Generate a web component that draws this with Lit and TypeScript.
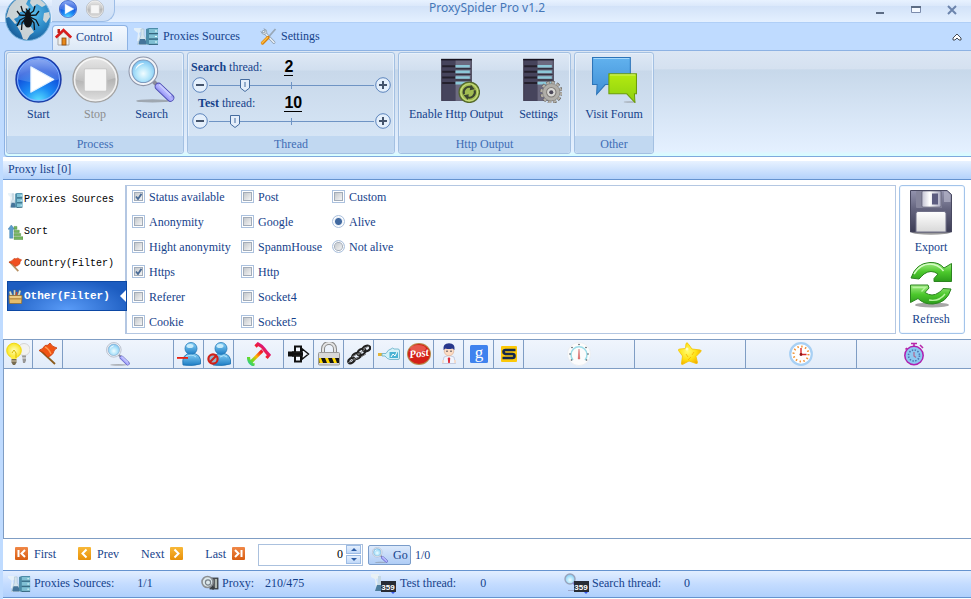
import { LitElement, html, svg, css } from "lit";
import { customElement, state } from "lit/decorators.js";

/* Shared gradients and symbols; every icon is referenced through <use>. */
const sprite = svg`
  <defs>
    <radialGradient id="gBlue" cx="50%" cy="100%" r="95%">
      <stop offset="0" stop-color="#5fe6ff"/><stop offset=".35" stop-color="#1c8cf5"/>
      <stop offset=".75" stop-color="#0d46d8"/><stop offset="1" stop-color="#2a62e6"/>
    </radialGradient>
    <linearGradient id="gShine" x1="0" y1="0" x2="0" y2="1">
      <stop offset="0" stop-color="#fff" stop-opacity=".45"/><stop offset="1" stop-color="#fff" stop-opacity=".15"/>
    </linearGradient>
    <linearGradient id="gGray" x1="0" y1="0" x2="0" y2="1">
      <stop offset="0" stop-color="#d4d4d4"/><stop offset=".5" stop-color="#b4b4b4"/><stop offset="1" stop-color="#e2e2e2"/>
    </linearGradient>
    <radialGradient id="gLens" cx="50%" cy="60%" r="60%">
      <stop offset="0" stop-color="#f0fcff"/><stop offset=".5" stop-color="#b4e6fb"/><stop offset="1" stop-color="#7cc4f2"/>
    </radialGradient>
    <linearGradient id="gHandle" x1="0" y1="1" x2="1" y2="0">
      <stop offset="0" stop-color="#5a5ad8"/><stop offset=".5" stop-color="#b4b4ff"/><stop offset="1" stop-color="#5c60c8"/>
    </linearGradient>
    <radialGradient id="gGlobe" cx="60%" cy="40%" r="65%">
      <stop offset="0" stop-color="#5cc0ee"/><stop offset=".6" stop-color="#2a86c4"/><stop offset="1" stop-color="#1a5c98"/>
    </radialGradient>
    <linearGradient id="gChatB" x1="0" y1="0" x2="0" y2="1">
      <stop offset="0" stop-color="#62b2ee"/><stop offset="1" stop-color="#3f8fd6"/>
    </linearGradient>
    <linearGradient id="gChatG" x1="0" y1="0" x2="0" y2="1">
      <stop offset="0" stop-color="#b4ea10"/><stop offset="1" stop-color="#8cd010"/>
    </linearGradient>
    <linearGradient id="gDisk" x1="0" y1="0" x2="0" y2="1">
      <stop offset="0" stop-color="#9494ae"/><stop offset=".45" stop-color="#64647e"/><stop offset="1" stop-color="#3c3c54"/>
    </linearGradient>
    <linearGradient id="gMetal" x1="0" y1="0" x2="1" y2="0">
      <stop offset="0" stop-color="#c4c4d4"/><stop offset=".4" stop-color="#fff"/><stop offset="1" stop-color="#a8a8c0"/>
    </linearGradient>
    <linearGradient id="gPaper" x1="0" y1="0" x2="0" y2="1">
      <stop offset="0" stop-color="#fff"/><stop offset="1" stop-color="#d8d8d8"/>
    </linearGradient>
    <linearGradient id="gGreen" x1="0" y1="0" x2="0" y2="1">
      <stop offset="0" stop-color="#a4ec86"/><stop offset=".5" stop-color="#4cc82c"/><stop offset="1" stop-color="#2c9c1c"/>
    </linearGradient>
    <linearGradient id="gUser" x1="0" y1="0" x2="0" y2="1">
      <stop offset="0" stop-color="#8cd4f8"/><stop offset="1" stop-color="#1c7cc4"/>
    </linearGradient>
    <linearGradient id="gRain" gradientUnits="userSpaceOnUse" x1="1" y1="22" x2="20" y2="3">
      <stop offset="0" stop-color="#20c8a0"/><stop offset=".2" stop-color="#6cdc20"/><stop offset=".42" stop-color="#ffb400"/>
      <stop offset=".65" stop-color="#f42020"/><stop offset=".85" stop-color="#e01870"/><stop offset="1" stop-color="#a028c0"/>
    </linearGradient>
    <linearGradient id="gOrange" x1="0" y1="0" x2="0" y2="1">
      <stop offset="0" stop-color="#f08848"/><stop offset="1" stop-color="#d85c10"/>
    </linearGradient>
    <linearGradient id="gAmber" x1="0" y1="0" x2="0" y2="1">
      <stop offset="0" stop-color="#f8b838"/><stop offset="1" stop-color="#e89008"/>
    </linearGradient>
    <radialGradient id="gStar" cx="40%" cy="40%" r="65%">
      <stop offset="0" stop-color="#fffc70"/><stop offset=".6" stop-color="#ffe010"/><stop offset="1" stop-color="#f4a800"/>
    </radialGradient>
    <radialGradient id="gBulb" cx="50%" cy="50%" r="60%">
      <stop offset="0" stop-color="#ffffc0"/><stop offset="1" stop-color="#f8e000"/>
    </radialGradient>
  </defs>

  <symbol id="globe" viewBox="0 0 46 46">
    <circle cx="23" cy="23" r="22.5" fill="url(#gGlobe)" stroke="#7ab4dc"/>
    <path fill="#dcdcd8" opacity=".9" d="M4 13C8 6 14 2 20 2l3 3-2 4 3 3-4 4-5 1-2 5-4 2 3 4-2 1-6-7-3 1zM26 3c6-1 11 2 15 7l-4 2-5-3-4 3-3-4zM12 31l6-2 8 3 3 5-4 3-3 5-4-1-2-6zM39 18l5-1 1 5-4 6-3-3z"/>
    <g fill="#101418"><ellipse cx="23" cy="27" rx="4" ry="5.500"/><ellipse cx="23" cy="20" rx="3" ry="3.200"/><circle cx="23" cy="16.500" r="1.800"/></g>
    <g fill="none" stroke="#101418" stroke-width="1.300" stroke-linejoin="round">
      <path d="M21.500 19l-4-3-1.500-5M21 20.500l-6-.5-3-4M21 22l-6 3-3 6M21 23l-4 5-.5 7M24.500 19l4-3 1.500-5M25 20.500l6-.5 3-4M25 22l6 3 3 6M25 23l4 5 .5 7M22 15.500l-1-2M24 15.500l1-2"/>
    </g>
  </symbol>

  <symbol id="play" viewBox="0 0 46 46">
    <circle cx="23" cy="23" r="22" fill="url(#gBlue)" stroke="#1c3ca8" stroke-width="1.4"/>
    <circle cx="23" cy="23" r="20.5" fill="none" stroke="#86b4ff" stroke-width="1"/>
    <path d="M3 23a20 20 0 0 1 40 0q-20 6-40 0z" fill="url(#gShine)"/>
    <path d="M15.500 10.500L38 23 15.500 35.500z" fill="#fff" stroke="#e0f0ff" stroke-linejoin="round"/>
  </symbol>
  <symbol id="stop" viewBox="0 0 46 46">
    <circle cx="23" cy="23" r="22" fill="url(#gGray)" stroke="#a4a4a4" stroke-width="1.4"/>
    <circle cx="23" cy="23" r="20.500" fill="none" stroke="#f0f0f0" stroke-width="1.6"/>
    <path d="M3 21a20 20 0 0 1 40 0q-20 8-40 2z" fill="url(#gShine)"/>
    <rect x="12" y="12.500" width="22" height="22" rx="1.500" fill="#f6f6f6" stroke="#c8c8c8"/>
  </symbol>
  <symbol id="search" viewBox="0 0 46 46">
    <ellipse cx="24" cy="44" rx="16" ry="1.600" fill="#666" opacity=".45"/>
    <path d="M24 24l6 6" stroke="#8c8c9c" stroke-width="4"/>
    <path d="M30 30l11.500 11" stroke="#4a4ab0" stroke-width="7.500" stroke-linecap="round"/>
    <path d="M30 30l11.500 11" stroke="url(#gHandle)" stroke-width="6" stroke-linecap="round"/>
    <path d="M31 28.500l10.500 10" stroke="#c8ccff" stroke-width="2" stroke-linecap="round"/>
    <circle cx="15" cy="15" r="14" fill="#f2f4f8" stroke="#8c94a8" stroke-width="1"/>
    <circle cx="15" cy="15" r="11" fill="url(#gLens)" stroke="#7c9cc0" stroke-width="1"/>
    <path d="M7 14a8 8 0 0 1 9-7q-6 2-9 7z" fill="#fff" opacity=".9"/>
  </symbol>

  <symbol id="house" viewBox="0 0 17 18">
    <path d="M3 9v8h11V9L8.500 4z" fill="#f0f0ec" stroke="#a8a8a8"/>
    <rect x="7" y="10" width="4" height="7" fill="#e88818" stroke="#8c4c10" stroke-width=".8"/>
    <path d="M2.500 1h2.500v4H2.500z" fill="#c02018"/>
    <path d="M.8 9.500L8.500 2l7.700 7.500" fill="none" stroke="#d81c1c" stroke-width="2.600"/>
  </symbol>
  <symbol id="sources" viewBox="0 0 25 18" preserveAspectRatio="none">
    <path d="M0 1h8v3L5 6l2 8H3l1-8-4-3z" fill="#e8f2f8" opacity=".9"/>
    <path d="M7 2h3v6l4 8q0 2-2 2H5q-2 0-1-2l3-8z" fill="#d4e4ee" stroke="#a8c0cc" stroke-width=".6"/>
    <path d="M6 12h5l2 4q0 1-1 1.500H5.500Q4 17 5 15z" fill="#44749a"/>
    <path d="M12 2l3-1h9v16l-9 1-3-1z" fill="#4c8ca8"/>
    <path d="M15 2h9v4h-9zM15 7.500h9v4h-9zM15 13h9v4h-9z" fill="#80c0d4"/>
    <path d="M15 6.500h9M15 12h9M15 17.400h9" stroke="#34647c" stroke-width="1"/>
    <path d="M21 4h2M21 9.500h2M21 15h2" stroke="#e8ffff" stroke-width="1"/>
  </symbol>
  <symbol id="tools" viewBox="0 0 17 17">
    <path d="M3.500 3.500L14 14.500" stroke="#8898a8" stroke-width="2.800" stroke-linecap="round"/>
    <path d="M3.500 3.500L14 14.500" stroke="#e8f0f8" stroke-width="1.600" stroke-linecap="round"/>
    <path d="M1 3.500L2.500 5 5 4.500 5.200 2 3.800.8Q7 1 6.800 4.400L5 6.500Q2 7 1 3.500z" fill="#dce4ec" stroke="#8090a0" stroke-width=".6"/>
    <path d="M15.500 1l-7 8" stroke="#98a8b8" stroke-width="1.800"/>
    <path d="M8 9.500L2.500 15" stroke="#d88010" stroke-width="3.200" stroke-linecap="round"/>
    <path d="M7.500 9.500l-5.500 5.500" stroke="#ffc040" stroke-width="1.400" stroke-linecap="round"/>
  </symbol>

  <symbol id="rack" viewBox="0 0 46 46">
    <rect x="8" y="3" width="30" height="41" fill="#3a3648"/>
    <path d="M9 4h13v40H9z" fill="#46445c"/><path d="M22 4h15v40H22z" fill="#6c6a80"/>
    <path d="M8 3.500h30" stroke="#181420" stroke-width="1.500"/>
    <path d="M9 10h13M9 15.500h13M9 21h13M9 26.500h13" stroke="#24202c" stroke-width="2"/>
    <path d="M22 10h14M22 15.500h14M22 21h14M22 26.500h14" stroke="#8cc8d8" stroke-width="2.600"/>
    <path d="M22 12.500h15M22 18h15M22 23.500h15" stroke="#34303e" stroke-width="1.400"/>
  </symbol>
  <symbol id="rackSync" viewBox="0 0 46 46">
    <use href="#rack" width="46" height="46"/>
    <circle cx="35.500" cy="35.500" r="10" fill="#a2bc52" stroke="#54682c" stroke-width="1.200"/>
    <circle cx="35.500" cy="35.500" r="8.300" fill="none" stroke="#c8dc80" stroke-width="1"/>
    <g fill="none" stroke="#3c4630" stroke-width="2"><path d="M30.300 37.500a5.500 5.500 0 0 1 7.500-6.800M40.700 33.500a5.500 5.500 0 0 1-7.500 6.800"/></g>
    <path d="M37 28l4 4.500-5 1zM34 43l-4-4.500 5-1z" fill="#3c4630"/>
  </symbol>
  <symbol id="rackGear" viewBox="0 0 46 46">
    <use href="#rack" width="46" height="46"/>
    <circle cx="35.500" cy="35.500" r="9" fill="none" stroke="#54504c" stroke-width="4.400" stroke-dasharray="2.900 1.812"/>
    <circle cx="35.500" cy="35.500" r="9" fill="none" stroke="#b4b0a8" stroke-width="3.400" stroke-dasharray="2.700 2.012"/>
    <circle cx="35.500" cy="35.500" r="8.500" fill="#b0aea8" stroke="#7c7a76" stroke-width=".6"/>
    <circle cx="35.500" cy="35.500" r="4.600" fill="#d8d8d4" stroke="#807c78"/>
    <circle cx="35.500" cy="35.500" r="2" fill="#4c4858"/>
  </symbol>
  <symbol id="chat" viewBox="0 0 46 46">
    <ellipse cx="38" cy="45" rx="6" ry="1" fill="#777" opacity=".35"/>
    <path d="M1.500 1.500h37V28H14L5.500 37.500 6 28H1.500z" fill="url(#gChatB)" stroke="#2c74b8"/>
    <path d="M2.500 2.500h35" stroke="#a4d8fc"/>
    <path d="M17.500 17.500h27v19.500h-2L43 45.500 35 37H17.500z" fill="url(#gChatG)" stroke="#6c9c08"/>
    <path d="M18.500 18.500h25" stroke="#d8f870"/>
  </symbol>
  <symbol id="disk" viewBox="0 0 46 46">
    <ellipse cx="23" cy="43.500" rx="19" ry="2.200" fill="#222" opacity=".45"/>
    <path d="M2.500 1.500H39l4.500 4V43h-41z" fill="url(#gDisk)" stroke="#484860"/>
    <path d="M36 2.500h3l3.500 3.500v7H36z" fill="#b4b4c8" opacity=".7"/>
    <rect x="8" y="2" width="26" height="17" rx="1" fill="#86869c"/>
    <rect x="14" y="2" width="19" height="16" rx="1" fill="url(#gMetal)" stroke="#505068" stroke-width=".6"/>
    <rect x="24" y="4.500" width="6" height="11" fill="#5c5c80"/>
    <path d="M8 43V24.500Q8 22.500 10 22.500h26q2 0 2 2V43z" fill="url(#gPaper)" stroke="#707088"/>
  </symbol>
  <symbol id="refresh" viewBox="0 0 46 48">
    <ellipse cx="24" cy="45" rx="17" ry="2.400" fill="#222" opacity=".4"/>
    <path d="M3 18Q8 3 22 2.500q9-.5 14 5.500l7.500-4.500V21.500H26v-3l4-4.500q-7-5-14 0-3 3-5 5z" fill="url(#gGreen)" stroke="#2c8420" stroke-linejoin="round"/>
    <path d="M6 14Q12 4 22 4q8 0 13.500 7" fill="none" stroke="#d4fcc4" stroke-width="1.600"/>
    <path d="M43 29Q39 43 25 44q-9 .5-15-5.500L2.500 42.500V25H20l1 3-4 4.500q7 5 14 0 3-2 4-4z" fill="url(#gGreen)" stroke="#2c8420" stroke-linejoin="round"/>
    <path d="M4.500 27.500h13l-4 4M37 34q-6 8-16 6" fill="none" stroke="#b8f4a0" stroke-width="1.400"/>
  </symbol>

  <symbol id="sort" viewBox="0 0 16 16">
    <path d="M3.500 0L7 4.500H5.200V14H1.800V4.500H0z" fill="#5c9ccc" stroke="#3c7cb0" stroke-width=".5"/>
    <path d="M6.500 1.500h3v3h-3zM6.500 5.500H12v2.500H6.500zM6.500 9h7v2.500h-7zM6.500 12.500H16V15.500H6.500z" fill="#74b45c" stroke="#4c8c3c" stroke-width=".5"/>
  </symbol>
  <symbol id="flag" viewBox="0 0 24 24">
    <path d="M4 8l15 14" stroke="#8c5c1c" stroke-width="1.800"/>
    <path d="M3 8.500Q7 7 9 3.500q3 .5 5-2.500 2 4 7 5-3 1-4 5.500-2 3-5.500 3.500Q9 10 3 8.500z" fill="#f05414" stroke="#c83808" stroke-width=".8"/>
    <path d="M9 5q4 2 6 7" fill="none" stroke="#ff9850" stroke-width="1.400"/>
  </symbol>
  <symbol id="flagLeft" viewBox="0 0 16 16">
    <path d="M1.500 5L11 15" stroke="#b89060" stroke-width="1.800"/>
    <path d="M1 5.500Q5 4 6.500 1.500q2 1 4-.5 2 1.500 4 2-2 2-2 4.500Q10 10 7.500 10 5 6.500 1 5.500z" fill="#f05020" stroke="#c03008" stroke-width=".6"/>
  </symbol>
  <symbol id="toolbox" viewBox="0 0 16 16">
    <path d="M2 7L1 3l2-1 2 5zM6 7V1h2v6zM10 7l2-6 2 1-1.500 5z" fill="#d8e0d0" stroke="#607060" stroke-width=".5"/>
    <path d="M8.500 7l1-4" stroke="#d04828" stroke-width="1.400"/>
    <path d="M1 7h14l-.5 8.500h-13z" fill="#e4bc6c" stroke="#946c28" stroke-width=".8"/>
    <path d="M1.500 10.500h13" stroke="#a87c34"/><path d="M2 8.500h12" stroke="#f8e0a4"/>
  </symbol>

  <symbol id="bulbs" viewBox="0 0 24 24">
    <circle cx="18" cy="7.500" r="6" fill="#f2f2f0" stroke="#d4d4d4"/><path d="M16 13.500h4v5l-1 2.500h-2z" fill="#989898"/><path d="M16 16h4" stroke="#eee"/>
    <circle cx="8" cy="8.500" r="7.300" fill="url(#gBulb)" stroke="#f0d810"/>
    <path d="M4.500 14h7l-1 3h-5z" fill="#ffec40"/><path d="M6 11l2-3 2 3v5" fill="none" stroke="#d8b800"/>
    <path d="M5.500 17h5v3.500L9 23H7l-1.500-2.500z" fill="#786c50"/><path d="M5.500 19h5" stroke="#d8ccb0"/>
  </symbol>
  <symbol id="userMinus" viewBox="0 0 24 24">
    <path d="M6 23Q4 12 14.500 11 25 12 23.500 22q-8 2.500-17.500 1z" fill="url(#gUser)" stroke="#1c70b0" stroke-width=".8"/>
    <circle cx="14" cy="6.500" r="6" fill="url(#gUser)" stroke="#2478b8" stroke-width=".8"/>
    <ellipse cx="13" cy="4" rx="3.500" ry="2" fill="#e0f8ff" opacity=".8"/><path d="M9 15q5-4 10 0" fill="none" stroke="#b0e4fc"/>
    <rect x="0" y="15" width="11" height="1.800" fill="#e82010"/>
  </symbol>
  <symbol id="userBlock" viewBox="0 0 24 24">
    <path d="M6 23Q4 12 14.500 11 25 12 23.500 22q-8 2.500-17.500 1z" fill="url(#gUser)" stroke="#1c70b0" stroke-width=".8"/>
    <circle cx="14" cy="6.500" r="6" fill="url(#gUser)" stroke="#2478b8" stroke-width=".8"/>
    <ellipse cx="13" cy="4" rx="3.500" ry="2" fill="#e0f8ff" opacity=".8"/><path d="M13 15q4-3 7 0" fill="none" stroke="#b0e4fc"/>
    <circle cx="6" cy="17" r="4.600" fill="#94b4cc" stroke="#d02018" stroke-width="2.200"/><path d="M3 20l6-6" stroke="#d02018" stroke-width="2.200"/>
  </symbol>
  <symbol id="rainbow" viewBox="0 0 24 24">
    <g fill="none" stroke="url(#gRain)" stroke-width="3.200">
      <path d="M4 20L15.500 8.500"/><path d="M8.500 4.500L11 2Q15 4 17 7t5 6l-2.500 3"/><path d="M1.500 15Q1.500 20 5.500 22.500l2 .5"/>
    </g>
  </symbol>
  <symbol id="cross" viewBox="0 0 24 24">
    <path d="M1 9.500h5v5H1z" fill="#101010"/><path d="M5 12h12" stroke="#101010" stroke-width="4.500"/>
    <path d="M8 4.500h6v15H8z" fill="#f4f8ff" stroke="#101010" stroke-width="2"/>
    <path d="M6 10h9V6.800L21.500 12 15 17.200V14H6z" fill="#f4f8ff" stroke="#101010" stroke-width="1.400"/>
    <path d="M5 12h11" stroke="#101010" stroke-width="3.600"/>
  </symbol>
  <symbol id="lock" viewBox="0 0 24 24">
    <path d="M6 12V7a6 6 0 0 1 12 0v5" fill="none" stroke="#888" stroke-width="4"/><path d="M6 12V7a6 6 0 0 1 12 0v5" fill="none" stroke="#e4e4e4" stroke-width="2"/>
    <rect x="1.500" y="10.500" width="21" height="12.500" rx="1" fill="#d8d8d8" stroke="#999"/><rect x="2" y="16" width="20" height="5" fill="#141414"/>
    <path d="M2 16h2l2 5H2.500zM8 16h3l2 5h-3zM15 16h3l2 5h-3z" fill="#ffd800"/>
  </symbol>
  <symbol id="chain" viewBox="0 0 24 24">
    <g fill="none" stroke="#202020" stroke-width="2.200"><ellipse cx="4.500" cy="18.500" rx="3.500" ry="2.200" transform="rotate(-35 4.500 18.500)"/><ellipse cx="9.500" cy="14" rx="4.500" ry="2.800" transform="rotate(-20 9.500 14)"/><ellipse cx="14.500" cy="10" rx="4.500" ry="2.800" transform="rotate(-35 14.500 10)"/><ellipse cx="19.500" cy="6.500" rx="3.800" ry="2.600" transform="rotate(-20 19.500 6.500)"/></g>
    <path d="M1 21l7-5M5 15l7-4M11 13l7-6M16 7l6-3M7 18l5-3M14 15l5-3" stroke="#777" stroke-width="1"/>
  </symbol>
  <symbol id="bottle" viewBox="0 0 24 24">
    <path d="M1 11h4v3H1z" fill="#e4b434"/><path d="M5 11.500h4q2-4 5-4.500 2-2 3 0h4q1.500 0 1.500 2V16q0 1.500-1.500 1.500h-8q-3-.5-5-3.500H5z" fill="#d4f2f8" stroke="#70b4cc" stroke-width=".9"/>
    <path d="M12.500 10H21v6h-8.500z" fill="#48b4d4"/><path d="M14 15l2-3 2 2 2-4" fill="none" stroke="#fff"/>
  </symbol>
  <symbol id="post" viewBox="0 0 24 24">
    <ellipse cx="12" cy="12" rx="12" ry="11" fill="#b88848"/><ellipse cx="12" cy="12" rx="11" ry="10" fill="#d42018"/>
    <ellipse cx="11" cy="6.500" rx="8" ry="3.500" fill="#f47c6c" opacity=".6"/>
  </symbol>
  <symbol id="boy" viewBox="0 0 24 24">
    <path d="M7 15q5-3 10 0l1.500 6.500H5.500z" fill="#f0f4fc" stroke="#b4bcd4" stroke-width=".7"/><path d="M12 15l1.200 1.500-.4 4.500h-1.600l-.4-4.500z" fill="#e02838"/>
    <circle cx="12" cy="9" r="4.800" fill="#fcdcc4" stroke="#d8a888" stroke-width=".6"/><path d="M6.500 8Q5.500 1.500 12 1.200 18.500 1.500 17.500 8l-2-1.500q-4 1-7 0z" fill="#28388c"/>
    <path d="M10 8.500v1.500M14 8.500v1.500" stroke="#282838"/><path d="M6 18v3M18 18v3" stroke="#fcdcc4" stroke-width="1.500"/>
  </symbol>
  <symbol id="google" viewBox="0 0 24 24"><rect x="3" y="3" width="18" height="18" rx="1.500" fill="#3f82ee"/></symbol>
  <symbol id="sBox" viewBox="0 0 24 24">
    <rect x="4" y="4" width="16" height="16" rx="1" fill="#fcc808"/>
    <path d="M18.500 8H8.500Q6.500 8 6.500 9.800t2 2.200h7q2 0 2 2t-2 2h-10" fill="none" stroke="#14284c" stroke-width="2.600"/>
  </symbol>
  <symbol id="gauge" viewBox="0 0 24 24">
    <circle cx="12" cy="12" r="11.500" fill="#fcfcfc" stroke="#e4e8ec" stroke-width=".6"/><path d="M6 18a8 8 0 1 1 12 0" fill="none" stroke="#9cdce8" stroke-width="1.500"/>
    <g fill="#505860"><circle cx="3" cy="12" r=".8"/><circle cx="5" cy="5.500" r=".8"/><circle cx="12" cy="2.500" r=".8"/><circle cx="19" cy="5.500" r=".8"/><circle cx="21" cy="12" r=".8"/><circle cx="4.500" cy="18" r=".8"/><circle cx="19.500" cy="18" r=".8"/></g>
    <path d="M11.200 17L12 7l.8 10z" fill="#d83030" stroke="#d88080" stroke-width=".6"/>
  </symbol>
  <symbol id="star" viewBox="0 0 24 24">
    <path d="M8 1.500q1-1.500 2 0l4 5.500 8.500 1q1.500.5 0 2L18 14.500l1.500 6q0 1.500-1.500 1l-7-2.500-6.500 3.500q-1.500 0-1-1.500l1-7-4-5.500Q0 7 2 7l5.500-.5z" fill="url(#gStar)" stroke="#f4c400" stroke-width=".8"/>
    <path d="M8 12l2 3M16 10l-2 3M10 18l3-3" stroke="#f8b400" stroke-width=".8"/><circle cx="9" cy="7" r="1.500" fill="#fffcc0"/>
  </symbol>
  <symbol id="clock" viewBox="0 0 24 24">
    <circle cx="12" cy="12" r="10.800" fill="#fff" stroke="#a8d0f4" stroke-width="2.200"/>
    <circle cx="12" cy="12" r="7.500" fill="none" stroke="#f09030" stroke-width="2" stroke-dasharray="1.400 2.527"/>
    <path d="M12 6v6.500h5.500" fill="none" stroke="#d82828" stroke-width="1.400"/><circle cx="12" cy="12.500" r="1.400" fill="#901818"/>
  </symbol>
  <symbol id="stopwatch" viewBox="0 0 24 24">
    <path d="M9 1.500h6M12 1.500v3M18 3l3 3M5 6L3.500 7.500" stroke="#b828a8" stroke-width="1.600"/>
    <circle cx="12" cy="13.500" r="9.200" fill="#8cc8f0" stroke="#b020b0" stroke-width="1.500"/>
    <circle cx="12" cy="13.500" r="5.500" fill="none" stroke="#4c74b0" stroke-width="1.600" stroke-dasharray="1.400 1.480"/>
    <path d="M12 10v4l2 1.500" fill="none" stroke="#b06890" stroke-width="1.200"/>
  </symbol>

  <symbol id="first" viewBox="0 0 13 13"><rect width="13" height="13" rx="1" fill="url(#gOrange)"/><path d="M3.500 3v7M10 3L6.500 6.500 10 10" fill="none" stroke="#fff" stroke-width="2"/></symbol>
  <symbol id="prev" viewBox="0 0 13 13"><rect width="13" height="13" rx="1" fill="url(#gAmber)"/><path d="M8.500 2.500l-4 4 4 4" fill="none" stroke="#fff" stroke-width="2"/></symbol>
  <symbol id="next" viewBox="0 0 13 13"><rect width="13" height="13" rx="1" fill="url(#gAmber)"/><path d="M4.500 2.500l4 4-4 4" fill="none" stroke="#fff" stroke-width="2"/></symbol>
  <symbol id="last" viewBox="0 0 13 13"><rect width="13" height="13" rx="1" fill="url(#gOrange)"/><path d="M9.500 3v7M3 3l3.500 3.500L3 10" fill="none" stroke="#fff" stroke-width="2"/></symbol>

  <symbol id="proxy" viewBox="0 0 18 16">
    <rect x="9" y="3" width="8" height="11" fill="#585c60" stroke="#303438" stroke-width=".8"/><path d="M14 4h2v9h-2z" fill="#b0b8b0"/>
    <path d="M9 10l4 4" stroke="#383c40" stroke-width="2.600"/>
    <circle cx="6.500" cy="7" r="5.500" fill="#dce8ec" stroke="#8c9094" stroke-width="1.600"/><circle cx="7" cy="7.500" r="2.600" fill="none" stroke="#788088" stroke-width="1.200"/>
  </symbol>
  <symbol id="counter" viewBox="0 0 25 21">
    <rect x="10" y="8" width="15" height="11" fill="#282c34"/>
    <path d="M20 19h4l-2 2z" fill="#3858f0"/>
  </symbol>
  <symbol id="countTest" viewBox="0 0 25 21">
    <path d="M0 1h8v4L5 6l3 9H5L4 6 0 4z" fill="#e8f0f4"/><path d="M7 3h3v5l3 10H4l3-9z" fill="#c4d8e4"/><path d="M6 12h4v6H4z" fill="#4c7c9c"/>
    <use href="#counter" width="25" height="21"/>
  </symbol>
  <symbol id="countSearch" viewBox="0 0 25 21">
    <circle cx="6" cy="6" r="5" fill="url(#gLens)" stroke="#98a4bc" stroke-width="1.400"/><path d="M9.500 9.500l4 4" stroke="#7c80d8" stroke-width="3"/><path d="M4 17.500h8" stroke="#88a" opacity=".6"/>
    <use href="#counter" width="25" height="21"/>
  </symbol>
`;

/* Lettering that sits on top of some icons. */
const digits = svg`<text x="17" y="17" text-anchor="middle" font-family="Liberation Sans, sans-serif" font-weight="bold" font-size="8" fill="#fff">359</text>`;
const LETTERS: Record<string, unknown> = {
  post: svg`<text x="12" y="15" text-anchor="middle" font-family="Liberation Serif, serif" font-weight="bold" font-style="italic" font-size="11" fill="#fff" transform="rotate(-8 12 12)">Post</text>`,
  google: svg`<text x="12" y="16" text-anchor="middle" font-family="Liberation Serif, serif" font-weight="normal" font-size="17" fill="#fff">g</text>`,
  countTest: digits,
  countSearch: digits,
};

const icon = (id: string, w: number, h = w) =>
  html`<svg width=${w} height=${h} aria-hidden="true"><use href="#${id}" width=${w} height=${h}></use>${LETTERS[id]}</svg>`;

const COLUMNS: [string, string, string][] = [
  ["bulbs", "Status", "first"], ["flag", "Country", "narrow"], ["search", "Address", "wide"],
  ["userMinus", "Anonymity", "narrow"], ["userBlock", "High anonymity", "narrow"], ["rainbow", "Type", "medium"],
  ["cross", "Http", "narrow"], ["lock", "Https", "narrow"], ["chain", "Referer", "narrow"], ["bottle", "Cookie", "narrow"],
  ["post", "Post", "narrow"], ["boy", "Custom", "narrow"], ["google", "Google", "narrow"], ["sBox", "Socket", "narrow"],
  ["gauge", "Speed", "wide"], ["star", "Rating", "wide"], ["clock", "Checked", "wide"], ["stopwatch", "Time", "rest"],
];

const FILTERS: string[][] = [
  ["Status available", "Anonymity", "Hight anonymity", "Https", "Referer", "Cookie"],
  ["Post", "Google", "SpanmHouse", "Http", "Socket4", "Socket5"],
];
const CHECKED = new Set(["Status available", "Https"]);

@customElement("app-root")
export class AppRoot extends LitElement {
  @state() private search = 2;
  @state() private test = 10;
  @state() private page = 0;

  static styles = css`
    :host {
      display: flex; flex-direction: column; min-height: 100vh; box-sizing: border-box;
      font: 12px/16px "Liberation Serif", serif; color: #15428b; background: #bfdbff;
      position: relative; overflow: hidden;
    }
    * { box-sizing: border-box; }
    button, input { font: inherit; color: inherit; margin: 0; }
    button { border: 0; padding: 0; background: none; }
    svg { display: block; flex: none; }
    .sprite { position: absolute; width: 0; height: 0; }

    .titlebar {
      display: grid; grid-template-columns: 1fr auto 1fr; height: 23px; padding-right: 1px;
      background: linear-gradient(#e8f2ff, #dce9fb 25%, #d2e2f8 27%, #e4f0ff); border-bottom: 1px solid #b0cff7;
    }
    .title { font: 12px/16px "Noto Sans", sans-serif; color: #4577b8; margin: 0; padding-left: 4px; }
    .quick {
      display: flex; align-items: center; gap: 9px; justify-self: start; height: 22px; width: 63px; margin-left: 52px; padding: 0 8px 4px 7px;
      border: 1px solid #9dbde6; border-width: 0 1px 1px 0; border-radius: 0 0 12px 0; background: linear-gradient(#dbe8fa, #cfe0f6);
    }
    .orb { position: absolute; left: 5px; top: -5px; z-index: 2; }
    .window { display: flex; justify-self: end; }
    .window button { width: 36px; height: 20px; display: grid; place-items: center; }

    .tabs { display: flex; align-items: flex-end; height: 27px; padding: 0 8px 0 52px; background: #bfdbff; }
    .tab { display: flex; align-items: center; gap: 4px; height: 25px; padding: 0 12px 3px 3px; }
    .tab.on {
      background: linear-gradient(#f4f9ff, #dce8f6); border: 1px solid #8db2e3; border-bottom: 0;
      border-radius: 4px 4px 0 0; width: 76px; padding: 0 2px 3px; margin-right: 3px;
    }
    .tab + .tab { margin-right: 5px; }
    .collapse { margin-left: auto; height: 27px; display: grid; place-items: center; width: 12px; }

    .ribbon {
      display: flex; gap: 3px; margin-left: 4px; padding: 1px 1px 2px; height: 107px;
      border: 1px solid #8db2e3; border-right: 0; border-bottom-color: #7ea9dd; border-radius: 4px 0 0 4px;
      background: linear-gradient(#dbe6f4, #d5e1f0 17%, #c7d8ea 18%, #e4f0ff 95%, #d6ffff);
    }
    .group {
      display: flex; flex-direction: column; border: 1px solid #a3c0e2; border-radius: 3px; box-shadow: inset 0 0 0 1px #e6f0fb;
      background: linear-gradient(#dee8f5, #d1dfef 17%, #c8d8ea 18%, #d9e8f8); margin: 0;
    }
    .caption { height: 17px; line-height: 16px; text-align: center; background: #c1d8f1; color: #3e6db5; border-radius: 0 0 3px 3px; }
    .tools { display: flex; flex: 1; padding: 3px; }
    .process { width: 178px; }
    .thread { width: 208px; }
    .http { width: 173px; }
    .other { width: 80px; }
    .http .tools { gap: 5px; padding-left: 8px; }
    .big { display: flex; flex-direction: column; align-items: center; gap: 3px; flex: 1; }
    .big.long { flex: none; width: 98px; }
    .big:disabled { color: #8d8d8d; }

    .sliders {
      flex: 1; display: grid; grid-template-columns: max-content 1fr; grid-auto-rows: 18px; column-gap: 22px;
      align-items: center; align-content: start; padding: 5px 3px 0 3px;
    }
    .sliders label { text-align: center; line-height: 18px; }
    .sliders output { font: bold 16px/16px "Liberation Sans", sans-serif; color: #000; justify-self: start; border-bottom: 1px solid #000; }
    .slide { grid-column: 1 / -1; display: flex; align-items: center; padding-left: 1px; }
    .slide input {
      appearance: none; flex: 1; min-width: 0; height: 14px; margin: 0 1px;
      background: linear-gradient(#6f94c4, #6f94c4) center / 1px 7px no-repeat, linear-gradient(#6f94c4, #6f94c4) center / 100% 1px no-repeat;
    }
    .slide input::-webkit-slider-thumb {
      appearance: none; width: 10px; height: 13px;
      background: url('data:image/svg+xml,<svg xmlns="http://www.w3.org/2000/svg" width="10" height="13"><path d="M.5 .5h9v8.500L5 12.500 .5 9z" fill="%23e4eefa" stroke="%23456c9f"/><path d="M5 3v5" stroke="%23456c9f"/></svg>');
    }
    .round { display: block; }

    .page { margin-left: 3px; flex: 1; display: flex; flex-direction: column; background: #fff; }
    .heading {
      margin: 3px 0 0; height: 20px; padding: 0 5px; font: inherit; line-height: 17px;
      background: linear-gradient(#e8f2ff, #b4d2fb); border: 1px solid #fff; border-bottom: 1px solid #6593cf; border-width: 1px 0;
    }
    .upper { display: flex; padding: 5px 6px 5px 4px; }
    .menu { width: 118px; flex: none; display: flex; flex-direction: column; gap: 2px; color: #000; }
    .menu button { display: flex; align-items: center; gap: 1px; height: 30px; padding-left: 1px; font: 10px/16px "Liberation Mono", monospace; }
    .menu button.on {
      position: relative; z-index: 1; margin-right: -2px; color: #fff; font-size: 11px; font-weight: bold; border: 1px solid #0c48a4; padding-left: 0;
      background: radial-gradient(ellipse at 50% 100%, #5a9cf8, #1c5cc0 80%);
    }
    .menu button.on::after { content: ""; margin-left: auto; border: 6px solid transparent; border-left: 0; border-right-color: #fff; }
    .filters {
      flex: 1; display: grid; grid-template-columns: 109px 91px 1fr; height: 149px; margin: 0 3px 0 0;
      border: 1px solid #b4c7e2; border-left-width: 2px; padding: 0 0 0 5px;
    }
    .filters div { display: flex; flex-direction: column; }
    .filters label { display: flex; align-items: center; gap: 4px; height: 25px; padding-bottom: 4px; white-space: nowrap; }
    .filters input {
      appearance: none; width: 13px; height: 13px; flex: none; border: 1px solid #abc1de;
      background: linear-gradient(135deg, #c4c8cc, #f4f4f4) content-box, #fff; padding: 2px; box-shadow: inset 0 0 0 1px #fff, inset 0 0 0 2px #a2acb9;
    }
    .filters input[type="checkbox"]:checked {
      background: url('data:image/svg+xml,<svg xmlns="http://www.w3.org/2000/svg" width="7" height="7"><path d="M1 3.500l2 2.500L6.500 .8" fill="none" stroke="%234a6b96" stroke-width="1.800"/></svg>') center no-repeat, linear-gradient(135deg, #c4c8cc, #f4f4f4) content-box, #fff;
    }
    .filters input[type="radio"] { border-radius: 50%; }
    .filters input[type="radio"]:checked { background: radial-gradient(circle, #4169a0 0 3px, #e8eef6 4px); box-shadow: inset 0 0 0 1px #fff; }
    .actions {
      width: 66px; flex: none; border: 1px solid #a3c4ea; border-radius: 3px; padding: 3px 2px 0 0;
      display: flex; flex-direction: column; align-items: center; gap: 5px; box-shadow: inset 0 0 0 1px #f2f8ff;
    }
    .actions .big { flex: none; gap: 4px; }
    .actions .big + .big { gap: 3px; }

    .results { flex: 1; border: 1px solid #7f9dc4; border-width: 1px 0 1px 1px; min-height: 60px; }
    table { width: 100%; table-layout: fixed; border-collapse: separate; border-spacing: 0; }
    th { height: 29px; padding: 0; border: solid #7f9dc4; border-width: 0 1px 1px 0; background: linear-gradient(#f0f5fd, #e2ecf9); }
    th svg { margin: 0 auto; }
    th:last-child { border-right: 0; }
    .first { width: 29px; } .narrow { width: 30px; } .medium { width: 50px; } .wide { width: 111px; }

    .pager { display: flex; align-items: center; height: 31px; padding: 0 0 2px 12px; gap: 22px; }
    .pager .nav { display: flex; align-items: center; gap: 6px; }
    .goto { display: flex; align-items: center; margin-left: -9px; padding-top: 2px; }
    .spin { display: flex; align-items: center; width: 105px; height: 22px; border: 1px solid #abc1de; padding-right: 1px; }
    .spin input { appearance: textfield; flex: 1; min-width: 0; height: 18px; border: 0; outline: 0; background: none; text-align: right; color: #000; padding: 0 3px; }
    .spin input::-webkit-inner-spin-button { appearance: none; }
    .arrows { display: flex; flex-direction: column; gap: 1px; }
    .arrows button { width: 15px; height: 9px; border: 1px solid #9cbbe4; background: linear-gradient(#e4effd, #c0d8f8); display: grid; place-items: center; }
    .go {
      display: flex; align-items: center; gap: 5px; height: 20px; width: 43px; margin: 0 4px 0 5px; padding-left: 3px;
      border: 1px solid #7a9cca; border-radius: 2px; background: linear-gradient(#dce9fb, #b0cdf6);
    }

    .status {
      display: grid; grid-template-columns: 193px 170px 193px 1fr; height: 28px; margin-bottom: 1px; padding-left: 5px;
      background: linear-gradient(#e2eeff, #c4dcff 50%, #b0d0fc); border: 1px solid #6593cf; border-width: 1px 0;
    }
    .cell { display: flex; align-items: center; gap: 3px; padding-bottom: 2px; }
    .cell strong { font-weight: normal; margin-left: 20px; }
    .cell.tight strong { margin-left: 8px; }
    .cell.count { gap: 4px; }
  `;

  private stepper(kind: "minus" | "plus", name: string, act: () => void) {
    return html`<button class="round" aria-label="${kind === "plus" ? "More" : "Fewer"} ${name} threads" @click=${act}>
      <svg width="16" height="16" viewBox="0 0 16 16"><circle cx="8" cy="8" r="7.300" fill="#e4effb" stroke="#5c84bc"/>
      <path d=${kind === "plus" ? "M4 8h8M8 4v8" : "M4 8h8"} stroke="#44546c" stroke-width="2"/></svg></button>`;
  }

  private box(name: string) {
    return html`<label><input type="checkbox" .checked=${CHECKED.has(name)} />${name}</label>`;
  }

  render() {
    return html`
      <svg class="sprite" aria-hidden="true">${sprite}</svg>
      <header class="titlebar">
        <div class="quick">
          <button aria-label="Start">${icon("play", 18)}</button>
          <button aria-label="Stop" disabled>${icon("stop", 18)}</button>
        </div>
        <h1 class="title">ProxySpider Pro v1.2</h1>
        <div class="window">
          <button aria-label="Minimize"><svg width="10" height="10"><path d="M1 8h8" stroke="#5c6c84" stroke-width="2"/></svg></button>
          <button aria-label="Maximize"><svg width="10" height="8"><path d="M.5 .5h9v6h-9z" fill="#f4f9ff" stroke="#7c8cac"/><path d="M0 1h10" stroke="#5c6c84" stroke-width="2"/></svg></button>
          <button aria-label="Close"><svg width="10" height="10"><path d="M1 1l8 8M9 1L1 9" stroke="#6c84ac" stroke-width="2"/></svg></button>
        </div>
      </header>
      <button class="orb" aria-label="Application menu">${icon("globe", 46)}</button>

      <nav class="tabs" role="tablist">
        <button class="tab on" role="tab" aria-selected="true">${icon("house", 17, 18)}Control</button>
        <button class="tab" role="tab">${icon("sources", 25, 18)}Proxies Sources</button>
        <button class="tab" role="tab">${icon("tools", 17)}Settings</button>
        <button class="collapse" aria-label="Collapse ribbon">
          <svg width="10" height="8"><path d="M1 5l4-4 4 4v2H7L5 5 3 7H1z" fill="#fff" stroke="#444c58"/></svg>
        </button>
      </nav>

      <section class="ribbon">
        <div class="group process">
          <div class="tools">
            <button class="big">${icon("play", 47)}Start</button>
            <button class="big" disabled>${icon("stop", 47)}Stop</button>
            <button class="big">${icon("search", 47)}Search</button>
          </div>
          <div class="caption">Process</div>
        </div>
        <div class="group thread">
          <div class="sliders">
            <label for="search"><b>Search</b> thread:</label><output for="search">${this.search}</output>
            <div class="slide">
              ${this.stepper("minus", "search", () => (this.search = Math.max(0, this.search - 1)))}
              <input id="search" type="range" min="0" max="10" .value=${String(this.search)}
                @input=${(e: Event) => (this.search = +(e.target as HTMLInputElement).value)} />
              ${this.stepper("plus", "search", () => (this.search = Math.min(10, this.search + 1)))}
            </div>
            <label for="test"><b>Test</b> thread:</label><output for="test">${this.test}</output>
            <div class="slide">
              ${this.stepper("minus", "test", () => (this.test = Math.max(0, this.test - 1)))}
              <input id="test" type="range" min="0" max="75" .value=${String(this.test)}
                @input=${(e: Event) => (this.test = +(e.target as HTMLInputElement).value)} />
              ${this.stepper("plus", "test", () => (this.test = Math.min(75, this.test + 1)))}
            </div>
          </div>
          <div class="caption">Thread</div>
        </div>
        <div class="group http">
          <div class="tools">
            <button class="big long">${icon("rackSync", 47)}Enable Http Output</button>
            <button class="big">${icon("rackGear", 47)}Settings</button>
          </div>
          <div class="caption">Http Output</div>
        </div>
        <div class="group other">
          <div class="tools"><button class="big">${icon("chat", 47)}Visit Forum</button></div>
          <div class="caption">Other</div>
        </div>
      </section>

      <main class="page">
        <h2 class="heading">Proxy list [0]</h2>
        <div class="upper">
          <nav class="menu">
            <button>${icon("sources", 15, 16)}Proxies Sources</button>
            <button>${icon("sort", 15)}Sort</button>
            <button>${icon("flagLeft", 15)}Country(Filter)</button>
            <button class="on">${icon("toolbox", 15)}Other(Filter)</button>
          </nav>
          <div class="filters">
            ${FILTERS.map((col) => html`<div>${col.map((n) => this.box(n))}</div>`)}
            <div>
              ${this.box("Custom")}
              <label><input type="radio" name="alive" checked />Alive</label>
              <label><input type="radio" name="alive" />Not alive</label>
            </div>
          </div>
          <div class="actions">
            <button class="big">${icon("disk", 46)}Export</button>
            <button class="big">${icon("refresh", 46, 48)}Refresh</button>
          </div>
        </div>
        <div class="results">
          <table>
            <thead><tr>
              ${COLUMNS.map(([id, name, size]) => html`<th class=${size} scope="col" aria-label=${name}>${icon(id, 24)}</th>`)}
            </tr></thead>
            <tbody></tbody>
          </table>
        </div>
        <div class="pager">
          <button class="nav">${icon("first", 13)}First</button>
          <button class="nav">${icon("prev", 13)}Prev</button>
          <button class="nav">Next${icon("next", 13)}</button>
          <button class="nav">Last${icon("last", 13)}</button>
          <div class="goto">
            <div class="spin">
              <input type="number" aria-label="Page" .value=${String(this.page)} />
              <div class="arrows">
                <button aria-label="Page up" @click=${() => this.page++}><svg width="6" height="3"><path d="M0 3l3-3 3 3z" fill="#2c5ca4"/></svg></button>
                <button aria-label="Page down" @click=${() => (this.page = Math.max(0, this.page - 1))}><svg width="6" height="3"><path d="M0 0l3 3 3-3z" fill="#2c5ca4"/></svg></button>
              </div>
            </div>
            <button class="go">${icon("search", 16)}Go</button>
            <span>1/0</span>
          </div>
        </div>
        <footer class="status">
          <div class="cell">${icon("sources", 23, 17)}<span>Proxies Sources:</span><strong>1/1</strong></div>
          <div class="cell tight">${icon("proxy", 18, 16)}<span>Proxy:</span><strong>210/475</strong></div>
          <div class="cell count">${icon("countTest", 25, 21)}<span>Test thread:</span><strong>0</strong></div>
          <div class="cell">${icon("countSearch", 25, 21)}<span>Search thread:</span><strong>0</strong></div>
        </footer>
      </main>
    `;
  }
}
